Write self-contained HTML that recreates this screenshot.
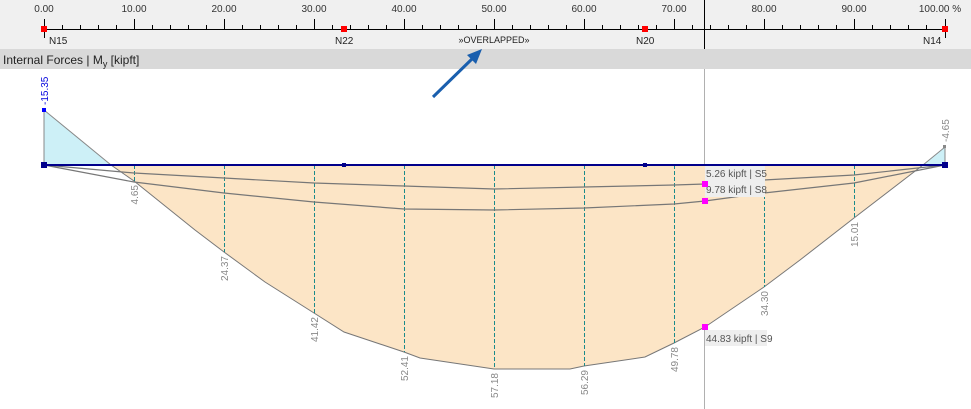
<!DOCTYPE html>
<html><head><style>
html,body{margin:0;padding:0;background:#fff;width:971px;height:409px;overflow:hidden}
svg{display:block;font-family:"Liberation Sans",sans-serif}
</style></head><body>
<svg width="971" height="409" viewBox="0 0 971 409" xmlns="http://www.w3.org/2000/svg">
<rect x="0" y="0" width="971" height="49" fill="#f0f0f0"/>
<rect x="0" y="49" width="971" height="20" fill="#d9d9d9"/>
<text x="3" y="64" font-size="12" fill="#222">Internal Forces | M<tspan font-size="9" dy="3">y</tspan><tspan dy="-3"> [kipft]</tspan></text>
<g font-size="10" fill="#333" text-anchor="middle">
<text x="44" y="12">0.00</text><text x="134" y="12">10.00</text><text x="224" y="12">20.00</text><text x="314" y="12">30.00</text><text x="404" y="12">40.00</text><text x="494" y="12">50.00</text><text x="584" y="12">60.00</text><text x="674" y="12">70.00</text><text x="764" y="12">80.00</text><text x="854" y="12">90.00</text><text x="940" y="12">100.00 %</text>
</g>
<line x1="44" y1="29.5" x2="945" y2="29.5" stroke="#000"/>
<g stroke="#000" stroke-width="1" id="ticks">
<path d="M44.5 19V38M134.5 19V29M224.5 19V29M314.5 19V29M404.5 19V29M494.5 19V29M584.5 19V29M674.5 19V29M764.5 19V29M854.5 19V29M945.5 19V38
M62.5 25V29M80.5 25V29M98.5 25V29M116.5 25V29M152.5 25V29M170.5 25V29M188.5 25V29M206.5 25V29M242.5 25V29M260.5 25V29M278.5 25V29M296.5 25V29M332.5 25V29M350.5 25V29M368.5 25V29M386.5 25V29M422.5 25V29M440.5 25V29M458.5 25V29M476.5 25V29M512.5 25V29M530.5 25V29M548.5 25V29M566.5 25V29M602.5 25V29M620.5 25V29M638.5 25V29M656.5 25V29M692.5 25V29M710.5 25V29M728.5 25V29M746.5 25V29M782.5 25V29M800.5 25V29M818.5 25V29M836.5 25V29M872.5 25V29M890.5 25V29M908.5 25V29M926.5 25V29"/>
</g>
<g fill="#ff0000"><rect x="41" y="26" width="6" height="6"/><rect x="341" y="26" width="6" height="6"/><rect x="642" y="26" width="6" height="6"/><rect x="942" y="26" width="6" height="6"/></g>
<g font-size="10" fill="#222"><text x="49" y="44">N15</text><text x="335" y="44">N22</text><text x="636" y="44">N20</text><text x="923" y="44">N14</text></g>
<text x="494" y="43" font-size="9" fill="#222" text-anchor="middle">»OVERLAPPED»</text>
<line x1="704.5" y1="0" x2="704.5" y2="49" stroke="#000"/>
<line x1="704.5" y1="69" x2="704.5" y2="409" stroke="#b0b0b0"/>
<!-- diagram -->
<polygon points="44,110 44,165 111,165" fill="#cdf0f7" stroke="#888" stroke-width="1"/>
<polygon points="945,147 945,165 923,165" fill="#cdf0f7" stroke="#888" stroke-width="1"/>
<polygon points="111,165 134,181 195,230 224,252 265,282 314,313 344,332 404,352 420,358 494,369 570,369 584,366 645,357 674,343 705,327 764,287 800,260 854,218 923,165" fill="#fce5c6" stroke="#777" stroke-width="1"/>
<g stroke="#1a8a8a" stroke-dasharray="4,2" stroke-width="1">
<path d="M134.5 165V181M224.5 165V252M314.5 165V313M404.5 165V352M494.5 165V369M584.5 165V366M674.5 165V343M764.5 165V287M854.5 165V218"/>
</g>
<polyline points="44,165 134,173 224,178 314,183 404,186 494,189 584,187 674,185 705,184 764,180 854,175 945,165" fill="none" stroke="#777" stroke-width="1.2"/>
<polyline points="44,165 134,182 224,193 314,202 404,209 494,210 584,208 674,204 705,201 764,193 854,183 945,165" fill="none" stroke="#777" stroke-width="1.2"/>
<line x1="44" y1="165" x2="945" y2="165" stroke="#00008b" stroke-width="2"/>
<g fill="#00008b"><rect x="41" y="162" width="6" height="6"/><rect x="342" y="163" width="4" height="4"/><rect x="643" y="163" width="4" height="4"/><rect x="942" y="162" width="6" height="6"/></g>
<rect x="42" y="108" width="4" height="4" fill="#0000ff"/>
<g fill="#888"><rect x="943" y="145" width="3" height="3"/></g>
<g font-size="10" fill="#888" text-anchor="end">
<text transform="translate(138,185) rotate(-90)">4.65</text>
<text transform="translate(228,256) rotate(-90)">24.37</text>
<text transform="translate(318,317) rotate(-90)">41.42</text>
<text transform="translate(408,356) rotate(-90)">52.41</text>
<text transform="translate(498,373) rotate(-90)">57.18</text>
<text transform="translate(588,370) rotate(-90)">56.29</text>
<text transform="translate(678,347) rotate(-90)">49.78</text>
<text transform="translate(768,291) rotate(-90)">34.30</text>
<text transform="translate(858,222) rotate(-90)">15.01</text>
</g>
<text transform="translate(48,105) rotate(-90)" font-size="10" fill="#0000dd">-15.35</text>
<text transform="translate(949,142) rotate(-90)" font-size="10" fill="#888">-4.65</text>
<rect x="705" y="166" width="60" height="31" fill="#eeeeee"/>
<rect x="705" y="330" width="62" height="16" fill="#eeeeee"/>
<g font-size="10" fill="#555">
<text x="706" y="177">5.26 kipft  | S5</text>
<text x="706" y="193">9.78 kipft  | S8</text>
<text x="706" y="342">44.83 kipft  | S9</text>
</g>
<g fill="#ff00ff"><rect x="702" y="181" width="6" height="6"/><rect x="702" y="198" width="6" height="6"/><rect x="702" y="324" width="6" height="6"/></g>
<line x1="433" y1="97" x2="474" y2="57" stroke="#1a5fae" stroke-width="3"/>
<polygon points="482,49 467,55 476,64" fill="#1a5fae"/>
</svg>
</body></html>
